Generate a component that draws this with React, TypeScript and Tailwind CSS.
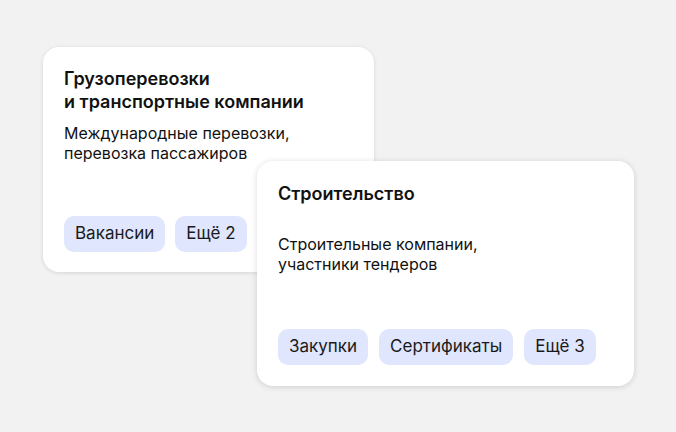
const chip = "rounded-[10px] bg-[#dfe6fd] px-[11px] h-[36px] flex items-center text-[17px] text-[#1a1a1a]";

export default function App() {
  return (
    <div className="relative w-[676px] h-[432px] bg-[#f2f2f2] overflow-hidden font-[Inter,sans-serif] text-[#111]">
      <div className="absolute left-[43px] top-[47px] w-[331px] h-[225px] bg-white rounded-[16px] shadow-[0_1px_4px_rgba(0,0,0,0.12)] px-[21px] pt-[20px] flex flex-col">
        <div className="text-[18px] font-semibold leading-[23px]">Грузоперевозки<br />и транспортные компании</div>
        <div className="mt-[10px] text-[16px] leading-[20px]">Международные перевозки,<br />перевозка пассажиров</div>
        <div className="mt-auto mb-[20px] flex gap-[10px]">
          <div className={chip}>Вакансии</div>
          <div className={chip}>Ещё 2</div>
        </div>
      </div>
      <div className="absolute left-[257px] top-[161px] w-[377px] h-[225px] bg-white rounded-[16px] shadow-[0_1px_6px_rgba(0,0,0,0.15)] px-[21px] pt-[21px] flex flex-col">
        <div className="text-[18px] font-semibold leading-[23px]">Строительство</div>
        <div className="mt-[29px] text-[16px] leading-[20px]">Строительные компании,<br />участники тендеров</div>
        <div className="mt-auto mb-[21px] flex gap-[11px]">
          <div className={chip}>Закупки</div>
          <div className={chip}>Сертификаты</div>
          <div className={chip}>Ещё 3</div>
        </div>
      </div>
    </div>
  );
}
